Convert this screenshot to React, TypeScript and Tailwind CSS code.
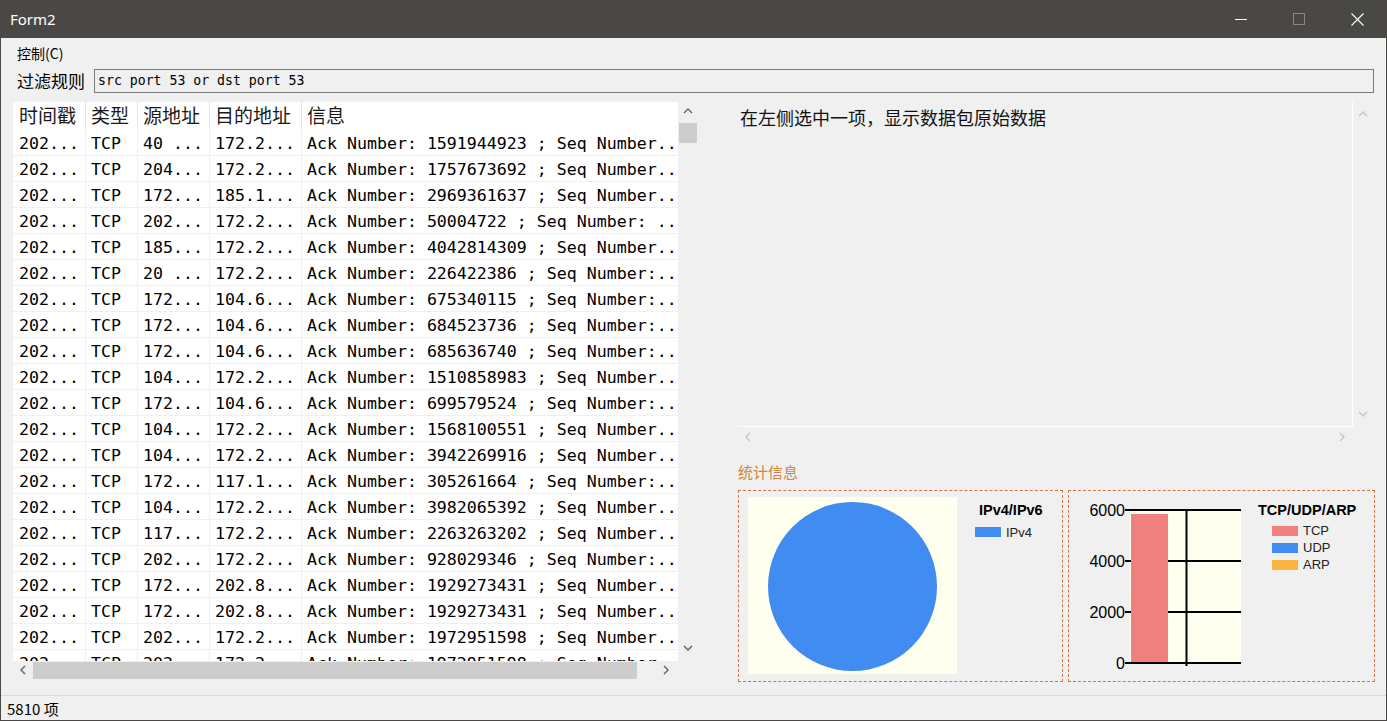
import React from "react";

type Row = [string, string, string, string, string];

const rows: Row[] = [
  ["202...", "TCP", "40 ...", "172.2...", "Ack Number: 1591944923 ; Seq Number.."],
  ["202...", "TCP", "204...", "172.2...", "Ack Number: 1757673692 ; Seq Number.."],
  ["202...", "TCP", "172...", "185.1...", "Ack Number: 2969361637 ; Seq Number.."],
  ["202...", "TCP", "202...", "172.2...", "Ack Number: 50004722 ; Seq Number: .."],
  ["202...", "TCP", "185...", "172.2...", "Ack Number: 4042814309 ; Seq Number.."],
  ["202...", "TCP", "20 ...", "172.2...", "Ack Number: 226422386 ; Seq Number:.."],
  ["202...", "TCP", "172...", "104.6...", "Ack Number: 675340115 ; Seq Number:.."],
  ["202...", "TCP", "172...", "104.6...", "Ack Number: 684523736 ; Seq Number:.."],
  ["202...", "TCP", "172...", "104.6...", "Ack Number: 685636740 ; Seq Number:.."],
  ["202...", "TCP", "104...", "172.2...", "Ack Number: 1510858983 ; Seq Number.."],
  ["202...", "TCP", "172...", "104.6...", "Ack Number: 699579524 ; Seq Number:.."],
  ["202...", "TCP", "104...", "172.2...", "Ack Number: 1568100551 ; Seq Number.."],
  ["202...", "TCP", "104...", "172.2...", "Ack Number: 3942269916 ; Seq Number.."],
  ["202...", "TCP", "172...", "117.1...", "Ack Number: 305261664 ; Seq Number:.."],
  ["202...", "TCP", "104...", "172.2...", "Ack Number: 3982065392 ; Seq Number.."],
  ["202...", "TCP", "117...", "172.2...", "Ack Number: 2263263202 ; Seq Number.."],
  ["202...", "TCP", "202...", "172.2...", "Ack Number: 928029346 ; Seq Number:.."],
  ["202...", "TCP", "172...", "202.8...", "Ack Number: 1929273431 ; Seq Number.."],
  ["202...", "TCP", "172...", "202.8...", "Ack Number: 1929273431 ; Seq Number.."],
  ["202...", "TCP", "202...", "172.2...", "Ack Number: 1972951598 ; Seq Number.."],
  ["202...", "TCP", "202...", "172.2...", "Ack Number: 1972951598 ; Seq Number.."],
];

function Chev({ dir, color }: { dir: "up" | "down" | "left" | "right"; color: string }) {
  const horiz = dir === "up" || dir === "down";
  const d =
    dir === "up"
      ? "M1 6 L5 2 L9 6"
      : dir === "down"
      ? "M1 2 L5 6 L9 2"
      : dir === "left"
      ? "M6 1 L2 5 L6 9"
      : "M2 1 L6 5 L2 9";
  return (
    <svg width={horiz ? 10 : 8} height={horiz ? 8 : 10} viewBox={horiz ? "0 0 10 8" : "0 0 8 10"}>
      <path d={d} fill="none" stroke={color} strokeWidth="1.4" />
    </svg>
  );
}

function TitleBar() {
  return (
    <div className="h-[38px] shrink-0 bg-[#4a4845] flex items-center">
      <span className="pl-[9px] text-white text-[15px] leading-none font-['Noto_Sans','Segoe_UI',sans-serif]">Form2</span>
      <div className="ml-auto flex h-full">
        <div className="w-[58px] h-full flex items-center justify-center">
          <svg width="12" height="12" viewBox="0 0 12 12">
            <line x1="0" y1="6.5" x2="12" y2="6.5" stroke="#ffffff" strokeWidth="1" />
          </svg>
        </div>
        <div className="w-[58px] h-full flex items-center justify-center">
          <svg width="12" height="12" viewBox="0 0 12 12">
            <rect x="0.5" y="0.5" width="11" height="11" fill="none" stroke="#8a8886" strokeWidth="1" />
          </svg>
        </div>
        <div className="w-[58px] h-full flex items-center justify-center">
          <svg width="13" height="13" viewBox="0 0 13 13">
            <path d="M0.5 0.5 L12.5 12.5 M12.5 0.5 L0.5 12.5" stroke="#ffffff" strokeWidth="1.1" />
          </svg>
        </div>
      </div>
    </div>
  );
}

const colW = ["w-[73px] pl-[6px]", "w-[52px] pl-[5px]", "w-[72px] pl-[5px]", "w-[92px] pl-[5px]", "w-[376px] pl-[5px]"];
const headers = ["时间戳", "类型", "源地址", "目的地址", "信息"];

function PacketTable() {
  return (
    <div className="flex flex-col w-[684px]">
      <div className="flex h-[559px]">
        <div className="w-[665px] h-full bg-white overflow-hidden">
          <div className="flex h-[28px]">
            {headers.map((h, i) => (
              <div
                key={i}
                className={`${colW[i]} shrink-0 h-full pb-[4px] border-r border-[#e5e5e5] last:border-r-0 flex items-center text-[19px] leading-none text-[#1a1a1a] font-['Noto_Sans_CJK_SC',sans-serif]`}
              >
                {h}
              </div>
            ))}
          </div>
          {rows.map((r, ri) => (
            <div key={ri} className="flex h-[26px] border-b border-[#f0f0f0]">
              {r.map((c, ci) => (
                <div
                  key={ci}
                  className={`${colW[ci]} shrink-0 h-full pt-[4px] border-r border-[#f0f0f0] last:border-r-0 flex items-center whitespace-nowrap overflow-hidden text-[16.6px] leading-none text-black font-['DejaVu_Sans_Mono',monospace]`}
                >
                  {c}
                </div>
              ))}
            </div>
          ))}
        </div>
        <div className="w-[19px] h-full flex flex-col">
          <div className="h-[18px] flex items-center justify-center">
            <Chev dir="up" color="#606060" />
          </div>
          <div className="mt-[3px] ml-[1px] h-[20px] bg-[#cdcdcd]" />
          <div className="mt-auto mb-[4px] h-[18px] flex items-center justify-center">
            <Chev dir="down" color="#606060" />
          </div>
        </div>
      </div>
      <div className="h-[18px] w-[665px] flex items-center">
        <div className="w-[19px] h-full flex items-center justify-center">
          <Chev dir="left" color="#606060" />
        </div>
        <div className="ml-[1px] w-[604px] h-[17px] bg-[#cdcdcd]" />
        <div className="ml-auto mr-[3px] w-[19px] h-full flex items-center justify-center">
          <Chev dir="right" color="#606060" />
        </div>
      </div>
    </div>
  );
}

function RawBox() {
  return (
    <div className="flex flex-col">
      <div className="flex h-[325px]">
        <div className="w-[615px] h-full border-r border-b border-white pl-[2px] pt-[3px] text-[18px] leading-[24px] text-[#111] font-['Noto_Sans_CJK_SC',sans-serif]">
          在左侧选中一项，显示数据包原始数据
        </div>
        <div className="w-[20px] h-full flex flex-col">
          <div className="pt-[3px] h-[20px] flex items-center justify-center">
            <Chev dir="up" color="#c4c4c4" />
          </div>
          <div className="mt-auto mb-[4px] h-[18px] flex items-center justify-center">
            <Chev dir="down" color="#c4c4c4" />
          </div>
        </div>
      </div>
      <div className="h-[19px] w-[615px] flex items-center">
        <div className="w-[19px] h-full flex items-center justify-center">
          <Chev dir="left" color="#c4c4c4" />
        </div>
        <div className="ml-auto mr-[2px] w-[19px] h-full flex items-center justify-center">
          <Chev dir="right" color="#c4c4c4" />
        </div>
      </div>
    </div>
  );
}

function PieCard() {
  return (
    <div className="w-[325px] h-[192px] border border-dashed border-[#cf7446] flex font-['Liberation_Sans',Arial,sans-serif]">
      <div className="ml-[9px] mt-[6px] w-[209px] h-[177px] bg-[#fffff0]">
        <svg width="209" height="177" viewBox="0 0 209 177">
          <circle cx="104.5" cy="89.5" r="84.5" fill="#418cf0" />
        </svg>
      </div>
      <div className="ml-[18px] pt-[10px] flex flex-col">
        <div className="pl-[4px] h-[18px] flex items-center text-[14.5px] font-bold text-black leading-none">IPv4/IPv6</div>
        <div className="mt-[5px] h-[16px] flex items-center">
          <div className="w-[26px] h-[10px] bg-[#418cf0]" />
          <span className="ml-[5px] text-[13px] leading-none text-[#222]">IPv4</span>
        </div>
      </div>
    </div>
  );
}

function BarCard() {
  const ys = [19, 70, 121, 172];
  const labels = ["6000", "4000", "2000", "0"];
  return (
    <div className="w-[307px] h-[192px] border border-dashed border-[#cf7446] flex font-['Liberation_Sans',Arial,sans-serif]">
      <svg width="180" height="190" viewBox="0 0 180 190" className="shrink-0">
        <rect x="61" y="18" width="111" height="154" fill="#fffff0" />
        {ys.map((y, i) => (
          <line key={"g" + i} x1="61" y1={y} x2="172" y2={y} stroke="#000" strokeWidth="2" />
        ))}
        <rect x="62" y="23" width="37" height="148" fill="#f08080" />
        <line x1="117.5" y1="18" x2="117.5" y2="175" stroke="#000" strokeWidth="2" />
        <line x1="61" y1="172" x2="172" y2="172" stroke="#000" strokeWidth="2" />
        {ys.map((y, i) => (
          <line key={"t" + i} x1="56" y1={y} x2="62" y2={y} stroke="#000" strokeWidth="2" />
        ))}
        {ys.map((y, i) => (
          <text
            key={"l" + i}
            x="56"
            y={y + 6}
            textAnchor="end"
            fontSize="16"
            fill="#000"
            fontFamily="'Liberation Sans', Arial, sans-serif"
          >
            {labels[i]}
          </text>
        ))}
      </svg>
      <div className="ml-[9px] pt-[10px] flex flex-col">
        <div className="h-[18px] flex items-center text-[14.5px] font-bold text-black leading-none">TCP/UDP/ARP</div>
        {[
          ["TCP", "bg-[#f08080]"],
          ["UDP", "bg-[#418cf0]"],
          ["ARP", "bg-[#fcb441]"],
        ].map(([n, c], i) => (
          <div key={n} className={`${i === 0 ? "mt-[3px]" : ""} pl-[14px] h-[17px] flex items-center`}>
            <div className={`w-[26px] h-[10px] ${c}`} />
            <span className="ml-[5px] text-[13px] leading-none text-[#222]">{n}</span>
          </div>
        ))}
      </div>
    </div>
  );
}

export default function App() {
  return (
    <div className="w-[1387px] h-[721px] flex flex-col bg-[#f0f0f0] border-x border-b border-[#4a4845] overflow-hidden font-['Noto_Sans_CJK_SC',sans-serif]">
      <TitleBar />
      <div className="h-[30px] shrink-0 flex items-center pl-[16px] text-[14px] leading-none text-black">控制(C)</div>
      <div className="h-[26px] shrink-0 flex items-center pl-[16px] pr-[12px]">
        <div className="w-[77px] shrink-0 pb-[2px] text-[17px] leading-none text-black">过滤规则</div>
        <div className="flex-1 h-[24px] border border-[#7a7a7a] bg-[#f0f0f0] flex items-center pl-[3px] text-[13.2px] leading-none text-black font-['DejaVu_Sans_Mono',monospace]">
          src port 53 or dst port 53
        </div>
      </div>
      <div className="mt-[8px] flex-1 flex pl-[12px] pr-[11px]">
        <PacketTable />
        <div className="ml-[41px] w-[637px] flex flex-col">
          <RawBox />
          <div className="mt-[15px] h-[20px] flex items-center text-[15px] leading-none text-[#d0883e]">统计信息</div>
          <div className="mt-[9px] flex gap-[5px]">
            <PieCard />
            <BarCard />
          </div>
        </div>
      </div>
      <div className="h-[25px] shrink-0 border-t border-[#d9d9d9] flex items-center pl-[6px] text-[15px] leading-none text-black">
        5810 项
      </div>
    </div>
  );
}
